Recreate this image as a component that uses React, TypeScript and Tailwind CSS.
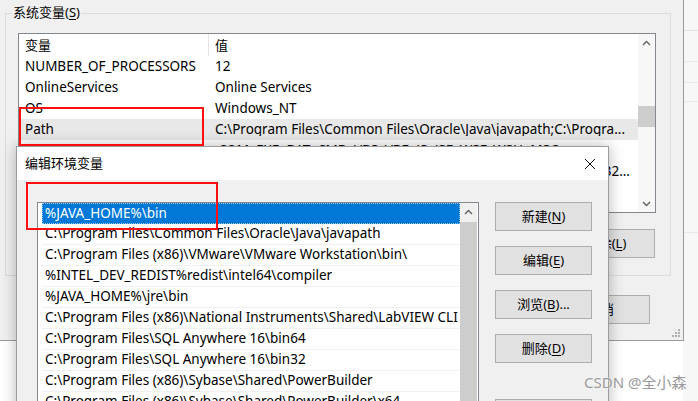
import type { ReactNode } from "react";

const sysRows: [string, string][] = [
  ["NUMBER_OF_PROCESSORS", "12"],
  ["OnlineServices", "Online Services"],
  ["OS", "Windows_NT"],
  ["Path", "C:\\Program Files\\Common Files\\Oracle\\Java\\javapath;C:\\Progra..."],
  ["PATHEXT", ".COM;.EXE;.BAT;.CMD;.VBS;.VBE;.JS;.JSE;.WSF;.WSH;.MSC"],
  ["PSModulePath", "%ProgramFiles%\\WindowsPowerShell\\Modules;C:\\WINDOWS\\system32..."],
  ["TEMP", "C:\\WINDOWS\\TEMP"],
];

const pathItems = [
  "%JAVA_HOME%\\bin",
  "C:\\Program Files\\Common Files\\Oracle\\Java\\javapath",
  "C:\\Program Files (x86)\\VMware\\VMware Workstation\\bin\\",
  "%INTEL_DEV_REDIST%redist\\intel64\\compiler",
  "%JAVA_HOME%\\jre\\bin",
  "C:\\Program Files (x86)\\National Instruments\\Shared\\LabVIEW CLI",
  "C:\\Program Files\\SQL Anywhere 16\\bin64",
  "C:\\Program Files\\SQL Anywhere 16\\bin32",
  "C:\\Program Files (x86)\\Sybase\\Shared\\PowerBuilder",
  "C:\\Program Files (x86)\\Sybase\\Shared\\PowerBuilder\\x64",
];

function Caret({ down = false }: { down?: boolean }) {
  return (
    <svg width="9" height="6" viewBox="0 0 9 6" aria-hidden>
      <path
        d={down ? "M1 1 4.5 4.5 8 1" : "M1 5 4.5 1.5 8 5"}
        fill="none"
        stroke="#606060"
        strokeWidth="1.4"
      />
    </svg>
  );
}

function WinButton({ children, className = "" }: { children: ReactNode; className?: string }) {
  return (
    <div
      className={[
        "flex h-[29px] w-[97px] shrink-0 items-center justify-center border border-[#adadad] bg-[#e1e1e1] text-[13px] text-black",
        className,
      ].join(" ")}
    >
      {children}
    </div>
  );
}

function Key({ k }: { k: string }) {
  return (
    <>
      (<span className="underline underline-offset-2">{k}</span>)
    </>
  );
}

export default function App() {
  return (
    <div className="relative h-[401px] w-[698px] overflow-hidden bg-white font-['Noto_Sans','Noto_Sans_CJK_SC',sans-serif] text-[13px] leading-none text-black">
      {/* window further behind, right edge */}
      <div className="absolute left-[683px] top-0 flex h-[401px] w-[15px] flex-col bg-[#f7f7f7]">
        <div className="mt-[30px] h-px bg-[#e2e2e2]" />
        <div className="mt-[30px] h-px bg-[#e8e8e8]" />
        <div className="mt-[20px] h-px bg-[#e8e8e8]" />
        <div className="mt-[18px] h-px bg-[#e8e8e8]" />
        <div className="mt-[130px] h-px bg-[#e8e8e8]" />
      </div>

      {/* system variables window */}
      <div className="absolute left-0 top-0 flex h-[341px] w-[684px] flex-col border-b border-r border-[#9a9a9a] bg-[#f0f0f0]">
        <div className="relative ml-[5px] mt-[13px] flex h-[263px] w-[666px] flex-col border border-[#dcdcdc]">
          <span className="absolute -top-[8px] left-[6px] bg-[#f0f0f0] px-px text-[13px]">
            系统变量<Key k="S" />
          </span>

          <div className="ml-[12px] mt-[19px] flex h-[180px] w-[638px] border border-[#828790] bg-white">
            <div className="flex min-w-0 flex-1 flex-col">
              <div className="flex h-[22px] shrink-0 items-center">
                <div className="flex h-full w-[190px] items-center border-r border-[#e5e5e5] pl-[6px]">变量</div>
                <div className="pl-[6px]">值</div>
              </div>
              {sysRows.map(([name, value]) => (
                <div
                  key={name}
                  className={[
                    "flex h-[21px] shrink-0 items-center text-[13.5px]",
                    name === "Path" ? "bg-[#e8e8e8]" : "",
                  ].join(" ")}
                >
                  <div className="w-[190px] shrink-0 truncate pl-[6px]">{name}</div>
                  {name === "PSModulePath" ? (
                    <div className="flex min-w-0 flex-1 justify-end overflow-hidden whitespace-nowrap pr-[8px]">
                      {value}
                    </div>
                  ) : (
                    <div className="min-w-0 flex-1 truncate pl-[6px] pr-[6px]">{value}</div>
                  )}
                </div>
              ))}
            </div>
            <div className="flex w-[17px] shrink-0 flex-col items-center bg-[#f7f7f7]">
              <div className="flex h-[17px] w-full items-center justify-center">
                <Caret />
              </div>
              <div className="mt-[55px] h-[21px] w-full bg-[#cdcdcd]" />
              <div className="flex-1" />
              <div className="flex h-[17px] w-full items-center justify-center">
                <Caret down />
              </div>
            </div>
          </div>

          <div className="mr-[15px] mt-[16px] flex justify-end gap-[8px]">
            <WinButton className="h-[28px] w-[98px]">新建(W)...</WinButton>
            <WinButton className="h-[28px] w-[98px]">编辑(I)...</WinButton>
            <WinButton className="h-[28px] w-[98px]">
              删除<Key k="L" />
            </WinButton>
          </div>
        </div>

        <div className="mr-[33px] mt-[19px] flex justify-end gap-[8px]">
          <WinButton className="h-[28px] w-[98px]">确定</WinButton>
          <WinButton className="h-[28px] w-[98px]">取消</WinButton>
        </div>

        <div className="mb-[3px] mr-[3px] mt-auto grid grid-cols-3 gap-px self-end">
          <span />
          <span />
          <span className="h-[2px] w-[2px] bg-[#b0b0b0]" />
          <span />
          <span className="h-[2px] w-[2px] bg-[#b0b0b0]" />
          <span className="h-[2px] w-[2px] bg-[#b0b0b0]" />
          <span className="h-[2px] w-[2px] bg-[#b0b0b0]" />
          <span className="h-[2px] w-[2px] bg-[#b0b0b0]" />
          <span className="h-[2px] w-[2px] bg-[#b0b0b0]" />
        </div>
      </div>

      {/* edit environment variable dialog */}
      <div className="absolute left-[16px] top-[146px] flex h-[280px] w-[593px] flex-col border border-[#9c9c9c] bg-[#f0f0f0] shadow-[0_0_14px_rgba(0,0,0,0.28)]">
        <div className="flex h-[33px] shrink-0 items-center justify-between bg-white pl-[8px] pr-[12px]">
          <span className="text-[13px]">编辑环境变量</span>
          <svg width="12" height="12" viewBox="0 0 12 12" aria-hidden>
            <path d="M1 1 11 11M11 1 1 11" stroke="#111" strokeWidth="1" />
          </svg>
        </div>

        <div className="flex">
          <div className="ml-[20px] mt-[22px] flex h-[260px] w-[442px] border border-[#828790] bg-white">
            <div className="flex min-w-0 flex-1 flex-col pl-[4px]">
              {pathItems.map((item, i) => (
                <div
                  key={item}
                  className={[
                    "flex h-[21px] shrink-0 items-center whitespace-nowrap pl-[3px] text-[13.5px]",
                    i === 0
                      ? "bg-[#0078d7] text-white outline outline-1 -outline-offset-1 outline-dotted outline-[#9cc8f0]"
                      : "border-b border-[#f0f0f0]",
                  ].join(" ")}
                >
                  {item}
                </div>
              ))}
            </div>
            <div className="flex w-[17px] shrink-0 flex-col bg-[#f0f0f0]">
              <div className="flex h-[18px] w-full items-center justify-center">
                <Caret />
              </div>
              <div className="mt-[1px] flex-1 bg-[#cdcdcd]" />
            </div>
            <div className="w-px shrink-0 bg-white" />
          </div>

          <div className="ml-[16px] mt-[22px] flex flex-col gap-[15px]">
            <WinButton>
              新建<Key k="N" />
            </WinButton>
            <WinButton>
              编辑<Key k="E" />
            </WinButton>
            <WinButton>
              浏览<Key k="B" />...
            </WinButton>
            <WinButton>
              删除<Key k="D" />
            </WinButton>
            <WinButton className="mt-[21px]">上移(U)</WinButton>
          </div>
        </div>
      </div>

      {/* annotations */}
      <div className="absolute left-[19px] top-[107px] h-[39px] w-[185px] border-2 border-[#ff1010]" />
      <div className="absolute left-[26px] top-[182px] h-[48px] w-[192px] border-2 border-[#ff1010]" />

      <div className="absolute left-[584px] top-[375px] text-[15px] text-[#9a9a9a] [text-shadow:0_0_2px_#fff]">
        CSDN @全小森
      </div>
    </div>
  );
}
